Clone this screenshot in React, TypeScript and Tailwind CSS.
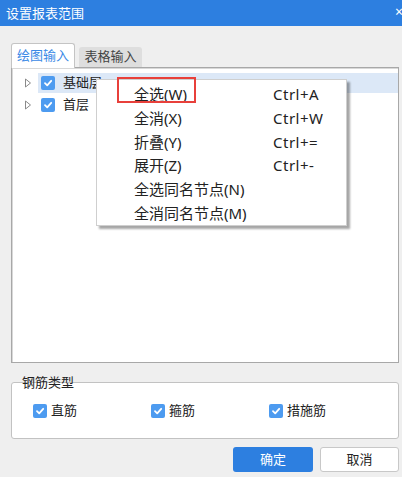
import React from "react";

const FONT = { fontFamily: "'Noto Sans', 'Noto Sans CJK SC', sans-serif" };

function Check() {
  return (
    <span className="flex h-[14px] w-[14px] shrink-0 items-center justify-center rounded-[2px] bg-[#4d9bf0]">
      <svg width="10" height="10" viewBox="0 0 10 10">
        <path d="M2 5.2 L4.2 7.3 L8.2 2.8" fill="none" stroke="#fff" strokeWidth="1.8" strokeLinecap="round" strokeLinejoin="round" />
      </svg>
    </span>
  );
}

function Arrow() {
  return (
    <svg width="8" height="10" viewBox="0 0 8 10" className="shrink-0">
      <path d="M1.5 1 L6.5 5 L1.5 9 Z" fill="none" stroke="#8a8a8a" strokeWidth="1" strokeLinejoin="round" />
    </svg>
  );
}

const menuItems: [string, string][] = [
  ["全选(W)", "Ctrl+A"],
  ["全消(X)", "Ctrl+W"],
  ["折叠(Y)", "Ctrl+="],
  ["展开(Z)", "Ctrl+-"],
  ["全选同名节点(N)", ""],
  ["全消同名节点(M)", ""],
];

export default function App() {
  return (
    <div className="relative flex h-[477px] w-[402px] flex-col overflow-hidden bg-[#efefef] text-[#222]" style={FONT}>
      {/* title bar */}
      <div className="relative flex h-[26px] shrink-0 items-center bg-[#2d7fe0] pl-[6px] text-[13px] leading-none text-white">
        设置报表范围
        <span className="absolute left-[395px] top-[5px] text-[14px] leading-none text-white">×</span>
      </div>

      <div className="flex flex-col pl-[11px] pr-[3px]">
        {/* tabs */}
        <div className="mt-[17px] flex h-[24px] items-end gap-[4px]">
          <div className="relative z-10 -mb-px flex h-[25px] w-[64px] items-center justify-center rounded-t-[3px] border border-b-0 border-[#c4c4c4] bg-white text-[13px] text-[#3b8ae6]">
            绘图输入
          </div>
          <div className="flex h-[20px] w-[63px] items-center justify-center rounded-t-[3px] bg-[#dedede] text-[13px] text-[#444]">
            表格输入
          </div>
        </div>

        {/* tree panel */}
        <div className="flex h-[296px] flex-col border border-[#a8a8a8] bg-white pt-[5px] shadow-[inset_1px_1px_0_#d8d8d8]">
          <div className="flex h-[20px] items-center">
            <div className="flex w-[26px] justify-end pr-[6px]">
              <Arrow />
            </div>
            <div className="flex h-full flex-1 items-center gap-[8px] bg-[#dce8f7] pl-[3px] text-[13px]">
              <Check />
              <span>基础层</span>
            </div>
          </div>
          <div className="flex h-[24px] items-center">
            <div className="flex w-[26px] justify-end pr-[6px]">
              <Arrow />
            </div>
            <div className="flex flex-1 items-center gap-[8px] pl-[3px] text-[13px]">
              <Check />
              <span>首层</span>
            </div>
          </div>
        </div>

        {/* group box */}
        <div className="relative mt-[19px] flex h-[57px] items-center rounded-[3px] border border-[#c2c2c2] bg-white pl-[21px] text-[13px]">
          <span className="absolute left-[10px] top-[-8px] text-[13px] leading-[14px]">钢筋类型</span>
          <div className="flex w-[118px] items-center gap-[4px]">
            <Check />
            <span>直筋</span>
          </div>
          <div className="flex w-[118px] items-center gap-[4px]">
            <Check />
            <span>箍筋</span>
          </div>
          <div className="flex items-center gap-[4px]">
            <Check />
            <span>措施筋</span>
          </div>
        </div>

        {/* buttons */}
        <div className="mt-[8px] flex justify-end gap-[7px]">
          <button className="flex h-[25px] w-[80px] items-center justify-center rounded-[3px] bg-[#2d7fe0] text-[13px] text-white">
            确定
          </button>
          <button className="flex h-[25px] w-[79px] items-center justify-center rounded-[3px] border border-[#c8c8c8] bg-white text-[13px] text-[#222]">
            取消
          </button>
        </div>
      </div>

      {/* context menu */}
      <div className="absolute left-[96px] top-[79px] flex h-[147px] w-[251px] flex-col border border-[#cfcfcf] bg-white pt-[3px] shadow-[3px_3px_2px_rgba(0,0,0,0.35)]">
        {menuItems.map(([label, key]) => (
          <div key={label} className="flex h-[24px] items-center text-[15px] leading-none text-[#222]">
            <span className="w-[176px] pl-[37px]">{label}</span>
            <span className="tracking-[0.5px]">{key}</span>
          </div>
        ))}
      </div>

      {/* red highlight */}
      <div className="absolute left-[117px] top-[77px] h-[26px] w-[79px] border-2 border-[#e8403b]" />
    </div>
  );
}
